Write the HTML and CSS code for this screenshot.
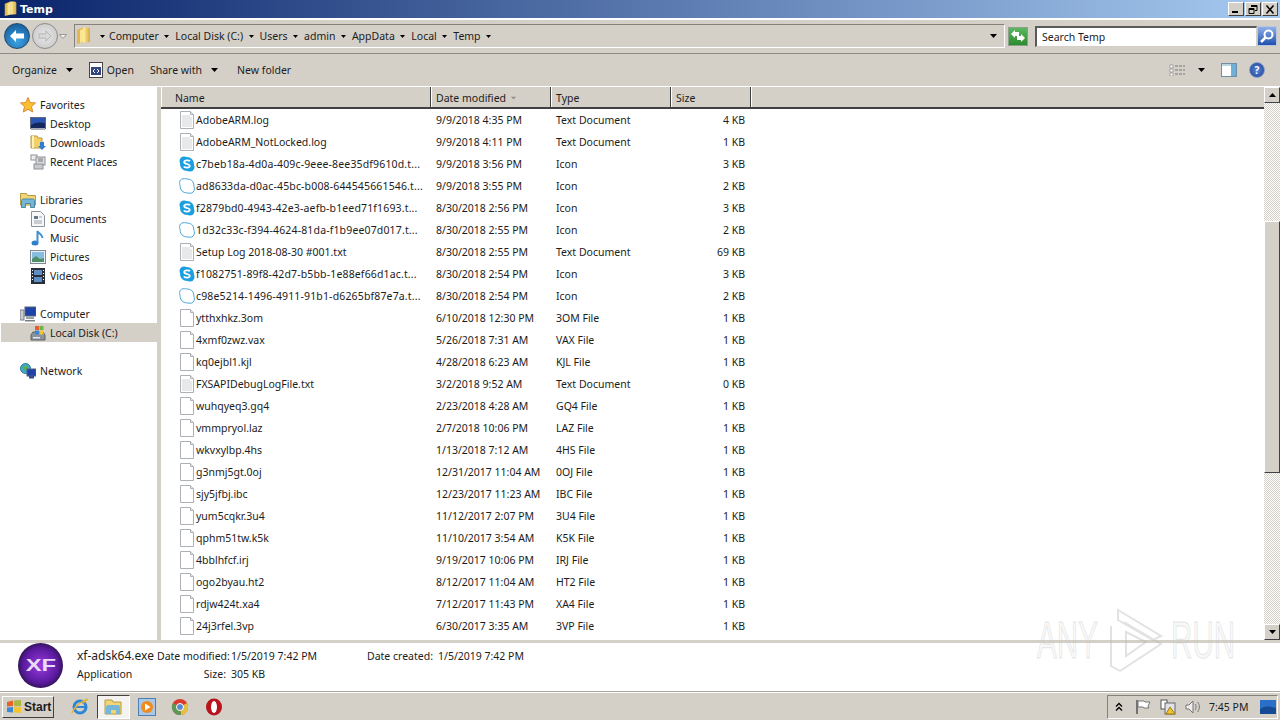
FILE: index.html
```html
<!DOCTYPE html>
<html lang="en">
<head>
    <meta charset="UTF-8">
    <title>Temp</title>
    <link rel="stylesheet" href="styles.css">
</head>
<body>
    <svg class="defs" width="0" height="0">
        <defs>
            <linearGradient id="folderFill" x1="0" y1="0" x2="1" y2="0">
                <stop offset="0" stop-color="#fff2a8"/>
                <stop offset="1" stop-color="#d9a93c"/>
            </linearGradient>
            <symbol id="doc" viewBox="0 0 16 18">
                <path d="M1.5.5h10l3 3v14h-13z" fill="#fff" stroke="#adb1b7"/>
                <path d="M11.5.5v3h3" fill="#e8e8e8" stroke="#adb1b7"/>
                <path d="M3 5h8M3 7h10M3 9h10M3 11h10M3 13h10M3 15h10" stroke="#cfd2d6"/>
            </symbol>
            <symbol id="blank" viewBox="0 0 16 18">
                <path d="M1.5.5h10l3 3v14h-13z" fill="#fff" stroke="#adb1b7"/>
                <path d="M11.5.5v3h3" fill="#e8e8e8" stroke="#adb1b7"/>
            </symbol>
            <symbol id="skype" viewBox="0 0 16 16">
                <circle cx="5" cy="5" r="4.5" fill="#1b9fe0"/>
                <circle cx="11" cy="11" r="4.5" fill="#1b9fe0"/>
                <circle cx="8" cy="8" r="7" fill="#1b9fe0"/>
                <path d="M11 5.2C10 4 5.4 3.8 5.2 6c-.2 2.400 5.800 1.600 5.600 4-.2 2.200-5 2-6 .6" fill="none" stroke="#fff" stroke-width="1.800"/>
            </symbol>
            <symbol id="skypeline" viewBox="0 0 16 16">
                <path d="M4 .8C6 .4 8 1 9 1.200c3.500 0 5.800 2.800 5.800 6 0 1.200.6 2 .6 3.800 0 2.500-2 4.300-4.400 4.300-1.500 0-2.200-.5-3.400-.5C4 14.800 1.200 12 1.200 8.500 1.200 7.500.6 6.500.6 4.500.6 2.500 2 1 4 .8z" fill="#fff" stroke="#4aa6d8"/>
            </symbol>
            <symbol id="folder" viewBox="0 0 16 18">
                <path d="M1 3l6-2.500v15L1 17z" fill="#e3b84d"/>
                <path d="M7 .5h5c1 0 2 1 2 2V15l-7 .5z" fill="url(#folderFill)"/>
                <path d="M4 3l3-1v13l-3 1z" fill="#fbe58f"/>
            </symbol>
            <symbol id="star" viewBox="0 0 16 16">
                <path d="M8 .5l2.200 5 5.300.5-4 3.500 1.200 5.500L8 12.300 3.300 15l1.200-5.500-4-3.500 5.300-.5z" fill="#fbc02d" stroke="#d98a3a"/>
            </symbol>
            <symbol id="desktop" viewBox="0 0 16 14">
                <rect x=".5" y=".5" width="15" height="11" fill="#2a55b0" stroke="#5d6a80"/>
                <path d="M1 8c4-3 9-3 14-2v5H1z" fill="#12285f"/>
                <rect x="1" y="11" width="14" height="2" fill="#a8adb5"/>
            </symbol>
            <symbol id="download" viewBox="0 0 16 16">
                <path d="M1 1h6l1 2h4v10H1z" fill="#f2cf69" stroke="#b8973d"/>
                <path d="M3 1v12" stroke="#fff2b5" stroke-width="2"/>
                <path d="M10 7h4v4h2l-4 4-4-4h2z" fill="#2f7fd0"/>
            </symbol>
            <symbol id="recent" viewBox="0 0 16 16">
                <rect x="1" y="1" width="6" height="5" fill="#eee" stroke="#8c9097"/>
                <rect x="6" y="3" width="9" height="8" fill="#ddd" stroke="#8c9097"/>
                <rect x="4" y="10" width="9" height="5" fill="#c7cacd" stroke="#8c9097"/>
                <path d="M8 5h5M8 7h5" stroke="#777"/>
            </symbol>
            <symbol id="libraries" viewBox="0 0 16 16">
                <path d="M.5 4V1.500h6l1 2h8V13H.5z" fill="#f2d675" stroke="#b69a45"/>
                <path d="M1.500 15.500v-7c0-1 1-1.500 2-1.500h9c1 0 2 .5 2 1.500v7h-4v-4h-5v4z" fill="#74b7d8" stroke="#4d87a5"/>
            </symbol>
            <symbol id="documents" viewBox="0 0 14 16">
                <path d="M.5.500h9l4 4v11H.5z" fill="#f6f7f9" stroke="#8b929c"/>
                <path d="M3 5h4v3H3z" fill="#63788f"/>
                <path d="M3 10h8M3 12h8M8 6h3" stroke="#9aa2ac"/>
            </symbol>
            <symbol id="music" viewBox="0 0 14 16">
                <ellipse cx="4" cy="13" rx="3.500" ry="2.500" fill="#2f7dc4"/>
                <path d="M6.500 13V1c1 3 5 3 5 7" fill="none" stroke="#3f8fd4" stroke-width="2"/>
            </symbol>
            <symbol id="pictures" viewBox="0 0 16 14">
                <rect x=".5" y=".5" width="15" height="13" fill="#eef1f4" stroke="#7f8a96"/>
                <rect x="2" y="2" width="12" height="10" fill="#86bde0"/>
                <path d="M2 9l4-3 4 3 4-1v4H2z" fill="#4f8f68"/>
            </symbol>
            <symbol id="videos" viewBox="0 0 14 16">
                <rect width="14" height="16" fill="#2a2f38"/>
                <path d="M3 2h8v5H3zM3 9h8v5H3z" fill="#5c8fc4"/>
                <path d="M1 2h1v1H1zM1 5h1v1H1zM1 8h1v1H1zM1 11h1v1H1zM12 2h1v1h-1zM12 5h1v1h-1zM12 8h1v1h-1zM12 11h1v1h-1z" fill="#fff"/>
            </symbol>
            <symbol id="computer" viewBox="0 0 16 16">
                <rect x="5" y="1" width="11" height="9" fill="#1d43a8" stroke="#55607a"/>
                <rect x="0" y="4" width="4" height="10" fill="#c8cace" stroke="#7a7e85"/>
                <rect x="6" y="11" width="8" height="2" fill="#9da1a8"/>
                <path d="M5 14h10v1.500H5z" fill="#7a7e85"/>
            </symbol>
            <symbol id="disk" viewBox="0 0 16 16">
                <path d="M1 10l2-3h10l2 3v5H1z" fill="#8b949c" stroke="#5b6168"/>
                <rect x="3" y="12" width="7" height="1.500" fill="#e5e7ea"/>
                <rect x="5" y="1" width="4" height="4" fill="#e85a30"/>
                <rect x="9.500" y="1" width="4" height="4" fill="#6ab544"/>
                <rect x="5" y="5.500" width="4" height="4" fill="#3a86d8"/>
                <rect x="9.500" y="5.500" width="4" height="4" fill="#f4c430"/>
            </symbol>
            <symbol id="network" viewBox="0 0 16 16">
                <circle cx="5.500" cy="5.500" r="5" fill="#41a9c9" stroke="#2d7a96"/>
                <path d="M2 3l3 1 2-2 1 3-3 3z" fill="#57b04a"/>
                <rect x="7" y="6" width="9" height="7" fill="#1d43a8" stroke="#55607a"/>
                <rect x="9" y="13" width="5" height="2.500" fill="#3a4a8a"/>
            </symbol>
            <symbol id="arrow" viewBox="0 0 7 4">
                <path d="M0 0h7L3.500 4z" fill="#000"/>
            </symbol>
        </defs>
    </svg>

    <div class="titlebar">
        <svg class="ico16"><use href="#folder"/></svg>
        <span class="title-text">Temp</span>
        <div class="winbtns">
            <span class="winbtn"><svg viewBox="0 0 10 9" width="10" height="9"><path d="M1 6h6v2H1z" fill="#000"/></svg></span>
            <span class="winbtn"><svg viewBox="0 0 10 9" width="10" height="9"><path d="M3 .5h6v5H7M3 1.500h6M1 3.500h5v5H1zM1 4.500h5" fill="none" stroke="#000"/></svg></span>
            <span class="winbtn winbtn-close"><svg viewBox="0 0 10 9" width="10" height="9"><path d="M1.500.5l7 8M8.500.5l-7 8" stroke="#000" stroke-width="1.500"/></svg></span>
        </div>
    </div>

    <div class="addressbar">
        <div class="navbtns">
            <span class="round back">
                <svg viewBox="0 0 16 14" width="16" height="14"><path d="M1 7l6-6v3.500h8v5H7V13z" fill="#fff"/></svg>
            </span>
            <span class="round forward">
                <svg viewBox="0 0 16 14" width="14" height="12"><path d="M15 7L9 1v3.500H1v5h8V13z" fill="#d8d8d8" stroke="#b0b0b0"/></svg>
            </span>
            <svg class="hist" viewBox="0 0 8 5"><path d="M.5.500h7L4 4.500z" fill="#eee" stroke="#999"/></svg>
        </div>
        <div class="pathbox">
            <svg class="path-folder"><use href="#folder"/></svg>
            <svg class="crumb-arrow first"><use href="#arrow"/></svg>
            <span>Computer</span><svg class="crumb-arrow"><use href="#arrow"/></svg>
            <span>Local Disk (C:)</span><svg class="crumb-arrow"><use href="#arrow"/></svg>
            <span>Users</span><svg class="crumb-arrow"><use href="#arrow"/></svg>
            <span>admin</span><svg class="crumb-arrow"><use href="#arrow"/></svg>
            <span>AppData</span><svg class="crumb-arrow"><use href="#arrow"/></svg>
            <span>Local</span><svg class="crumb-arrow"><use href="#arrow"/></svg>
            <span>Temp</span><svg class="crumb-arrow"><use href="#arrow"/></svg>
            <svg class="path-drop"><use href="#arrow"/></svg>
        </div>
        <span class="refresh">
            <svg viewBox="0 0 14 12" width="14" height="12"><path d="M0 4l4-4v2h4v4H4v2zM14 8l-4 4v-2H6V6h4V4z" fill="#fff"/></svg>
        </span>
        <div class="searchbox">Search Temp</div>
        <span class="searchbtn">
            <svg viewBox="0 0 16 16" width="16" height="16"><circle cx="9.500" cy="6.500" r="4" fill="none" stroke="#fff" stroke-width="2"/><path d="M6.500 9.500L2 14" stroke="#fff" stroke-width="2.500"/></svg>
        </span>
    </div>

    <div class="toolbar">
        <span class="tool tool-org">Organize<svg class="tool-arrow"><use href="#arrow"/></svg></span>
        <span class="tool tool-open">
            <svg class="open-ico" viewBox="0 0 14 16"><rect x=".5" y=".5" width="13" height="15" fill="#fff" stroke="#444"/><rect x="2" y="5" width="10" height="8" fill="#33457e"/><path d="M4 9l2-2M4 9l2 2M10 9L8 7M10 9l-2 2" stroke="#fff"/></svg>
            Open
        </span>
        <span class="tool tool-share">Share with<svg class="tool-arrow"><use href="#arrow"/></svg></span>
        <span class="tool">New folder</span>
        <div class="tool-right">
            <svg class="views" viewBox="0 0 16 12"><path d="M1 1h3v3H1zM1 5h3v3H1zM1 9h3v3H1z" fill="#fff" stroke="#8a8a8a" stroke-width=".7"/><path d="M6 2h10M6 6h10M6 10h10" stroke="#77797d" stroke-dasharray="3 1"/></svg>
            <svg class="views-arrow"><use href="#arrow"/></svg>
            <svg class="pane" viewBox="0 0 16 14"><rect x=".5" y=".5" width="15" height="13" fill="#fff" stroke="#6f8ea8"/><rect x="10" y="1" width="5" height="12" fill="#6fb0d8"/><rect x="1" y="1" width="9" height="2" fill="#bcd3e4"/></svg>
            <span class="help">?</span>
        </div>
    </div>

    <div class="main">
        <nav class="sidebar">
            <div class="nav-group">
                <div class="nav-head"><svg class="ico16"><use href="#star"/></svg>Favorites</div>
                <div class="nav-item"><svg class="ico16"><use href="#desktop"/></svg>Desktop</div>
                <div class="nav-item"><svg class="ico16"><use href="#download"/></svg>Downloads</div>
                <div class="nav-item"><svg class="ico16"><use href="#recent"/></svg>Recent Places</div>
            </div>
            <div class="nav-group">
                <div class="nav-head"><svg class="ico16"><use href="#libraries"/></svg>Libraries</div>
                <div class="nav-item"><svg class="ico16"><use href="#documents"/></svg>Documents</div>
                <div class="nav-item"><svg class="ico16"><use href="#music"/></svg>Music</div>
                <div class="nav-item"><svg class="ico16"><use href="#pictures"/></svg>Pictures</div>
                <div class="nav-item"><svg class="ico16"><use href="#videos"/></svg>Videos</div>
            </div>
            <div class="nav-group">
                <div class="nav-head"><svg class="ico16"><use href="#computer"/></svg>Computer</div>
                <div class="nav-item selected"><svg class="ico16"><use href="#disk"/></svg>Local Disk (C:)</div>
            </div>
            <div class="nav-group">
                <div class="nav-head"><svg class="ico16"><use href="#network"/></svg>Network</div>
            </div>
        </nav>

        <section class="files">
            <div class="list-head">
                <span class="col-head name-head">Name</span>
                <span class="col-head">Date modified<svg class="sort" viewBox="0 0 7 4"><path d="M0 0h7L3.500 4z" fill="#8f8f8f"/></svg></span>
                <span class="col-head">Type</span>
                <span class="col-head">Size</span>
                <span class="col-fill"></span>
            </div>
            <div class="rows">
                <div class="row"><span class="c-name"><svg class="file-ico"><use href="#doc"/></svg>AdobeARM.log</span><span>9/9/2018 4:35 PM</span><span>Text Document</span><span class="c-size">4 KB</span></div>
                <div class="row"><span class="c-name"><svg class="file-ico"><use href="#doc"/></svg>AdobeARM_NotLocked.log</span><span>9/9/2018 4:11 PM</span><span>Text Document</span><span class="c-size">1 KB</span></div>
                <div class="row"><span class="c-name c-hash"><svg class="file-ico"><use href="#skype"/></svg>c7beb18a-4d0a-409c-9eee-8ee35df9610d.t...</span><span>9/9/2018 3:56 PM</span><span>Icon</span><span class="c-size">3 KB</span></div>
                <div class="row"><span class="c-name c-hash"><svg class="file-ico"><use href="#skypeline"/></svg>ad8633da-d0ac-45bc-b008-644545661546.t...</span><span>9/9/2018 3:55 PM</span><span>Icon</span><span class="c-size">2 KB</span></div>
                <div class="row"><span class="c-name c-hash"><svg class="file-ico"><use href="#skype"/></svg>f2879bd0-4943-42e3-aefb-b1eed71f1693.t...</span><span>8/30/2018 2:56 PM</span><span>Icon</span><span class="c-size">3 KB</span></div>
                <div class="row"><span class="c-name c-hash"><svg class="file-ico"><use href="#skypeline"/></svg>1d32c33c-f394-4624-81da-f1b9ee07d017.t...</span><span>8/30/2018 2:55 PM</span><span>Icon</span><span class="c-size">2 KB</span></div>
                <div class="row"><span class="c-name"><svg class="file-ico"><use href="#doc"/></svg>Setup Log 2018-08-30 #001.txt</span><span>8/30/2018 2:55 PM</span><span>Text Document</span><span class="c-size">69 KB</span></div>
                <div class="row"><span class="c-name c-hash"><svg class="file-ico"><use href="#skype"/></svg>f1082751-89f8-42d7-b5bb-1e88ef66d1ac.t...</span><span>8/30/2018 2:54 PM</span><span>Icon</span><span class="c-size">3 KB</span></div>
                <div class="row"><span class="c-name c-hash"><svg class="file-ico"><use href="#skypeline"/></svg>c98e5214-1496-4911-91b1-d6265bf87e7a.t...</span><span>8/30/2018 2:54 PM</span><span>Icon</span><span class="c-size">2 KB</span></div>
                <div class="row"><span class="c-name"><svg class="file-ico"><use href="#blank"/></svg>ytthxhkz.3om</span><span>6/10/2018 12:30 PM</span><span>3OM File</span><span class="c-size">1 KB</span></div>
                <div class="row"><span class="c-name"><svg class="file-ico"><use href="#blank"/></svg>4xmf0zwz.vax</span><span>5/26/2018 7:31 AM</span><span>VAX File</span><span class="c-size">1 KB</span></div>
                <div class="row"><span class="c-name"><svg class="file-ico"><use href="#blank"/></svg>kq0ejbl1.kjl</span><span>4/28/2018 6:23 AM</span><span>KJL File</span><span class="c-size">1 KB</span></div>
                <div class="row"><span class="c-name"><svg class="file-ico"><use href="#doc"/></svg>FXSAPIDebugLogFile.txt</span><span>3/2/2018 9:52 AM</span><span>Text Document</span><span class="c-size">0 KB</span></div>
                <div class="row"><span class="c-name"><svg class="file-ico"><use href="#blank"/></svg>wuhqyeq3.gq4</span><span>2/23/2018 4:28 AM</span><span>GQ4 File</span><span class="c-size">1 KB</span></div>
                <div class="row"><span class="c-name"><svg class="file-ico"><use href="#blank"/></svg>vmmpryol.laz</span><span>2/7/2018 10:06 PM</span><span>LAZ File</span><span class="c-size">1 KB</span></div>
                <div class="row"><span class="c-name"><svg class="file-ico"><use href="#blank"/></svg>wkvxylbp.4hs</span><span>1/13/2018 7:12 AM</span><span>4HS File</span><span class="c-size">1 KB</span></div>
                <div class="row"><span class="c-name"><svg class="file-ico"><use href="#blank"/></svg>g3nmj5gt.0oj</span><span>12/31/2017 11:04 AM</span><span>0OJ File</span><span class="c-size">1 KB</span></div>
                <div class="row"><span class="c-name"><svg class="file-ico"><use href="#blank"/></svg>sjy5jfbj.ibc</span><span>12/23/2017 11:23 AM</span><span>IBC File</span><span class="c-size">1 KB</span></div>
                <div class="row"><span class="c-name"><svg class="file-ico"><use href="#blank"/></svg>yum5cqkr.3u4</span><span>11/12/2017 2:07 PM</span><span>3U4 File</span><span class="c-size">1 KB</span></div>
                <div class="row"><span class="c-name"><svg class="file-ico"><use href="#blank"/></svg>qphm51tw.k5k</span><span>11/10/2017 3:54 AM</span><span>K5K File</span><span class="c-size">1 KB</span></div>
                <div class="row"><span class="c-name"><svg class="file-ico"><use href="#blank"/></svg>4bblhfcf.irj</span><span>9/19/2017 10:06 PM</span><span>IRJ File</span><span class="c-size">1 KB</span></div>
                <div class="row"><span class="c-name"><svg class="file-ico"><use href="#blank"/></svg>ogo2byau.ht2</span><span>8/12/2017 11:04 AM</span><span>HT2 File</span><span class="c-size">1 KB</span></div>
                <div class="row"><span class="c-name"><svg class="file-ico"><use href="#blank"/></svg>rdjw424t.xa4</span><span>7/12/2017 11:43 PM</span><span>XA4 File</span><span class="c-size">1 KB</span></div>
                <div class="row"><span class="c-name"><svg class="file-ico"><use href="#blank"/></svg>24j3rfel.3vp</span><span>6/30/2017 3:35 AM</span><span>3VP File</span><span class="c-size">1 KB</span></div>
            </div>
        </section>

        <div class="scrollbar">
            <span class="sb-btn"><svg class="sb-up"><use href="#arrow"/></svg></span>
            <div class="sb-track">
                <div class="sb-thumb"></div>
            </div>
            <span class="sb-btn"><svg class="sb-down"><use href="#arrow"/></svg></span>
        </div>
    </div>

    <div class="details">
        <div class="app-logo"><span class="app-logo-text">XF</span></div>
        <div class="det-col det-name">
            <div class="det-filename">xf-adsk64.exe</div>
            <div>Application</div>
        </div>
        <div class="det-col det-mod">
            <div class="det-pair"><span class="det-key">Date modified:</span><span>1/5/2019 7:42 PM</span></div>
            <div class="det-pair"><span class="det-key">Size:</span><span>305 KB</span></div>
        </div>
        <div class="det-col det-created">
            <div class="det-pair"><span>Date created:</span><span>1/5/2019 7:42 PM</span></div>
        </div>
    </div>

    <div class="taskbar">
        <span class="start">
            <svg viewBox="0 0 16 14" width="16" height="14"><path d="M1 2l6-1.500V6L1 6.500z" fill="#e8602c"/><path d="M8 .5l7-.5v6l-7 .3z" fill="#a8b840"/><path d="M1 7.500L7 7v5.500L1 12z" fill="#3a8ad8"/><path d="M8 7.300l7-.3v6l-7-.5z" fill="#f4c430"/></svg>
            Start
        </span>
        <div class="quick">
            <span class="qbtn">
                <svg viewBox="0 0 18 18" width="18" height="18"><circle cx="9" cy="9" r="6" fill="none" stroke="#2f86d4" stroke-width="3"/><path d="M5 9h9" stroke="#2f86d4" stroke-width="2"/><path d="M1 15C3 9 10 3 17 1c-2 1-4 3-5 4" fill="none" stroke="#e8b22c" stroke-width="1.500"/></svg>
            </span>
            <span class="qbtn qbtn-active">
                <svg viewBox="0 0 18 16" width="18" height="16"><path d="M1 3V1h7l1 2h8v12H1z" fill="#f2d675" stroke="#b69a45"/><path d="M2 15V8c0-1 1-2 2-2h10c1 0 2 1 2 2v7h-4v-4H7v4z" fill="#74b7d8"/></svg>
            </span>
            <span class="qbtn">
                <svg viewBox="0 0 18 18" width="18" height="18"><rect x=".5" y=".5" width="17" height="17" fill="#a9c8e8" stroke="#4d7fb5"/><circle cx="9" cy="9" r="6" fill="#f08a1c"/><path d="M7 5.500L12.500 9 7 12.500z" fill="#fff"/></svg>
            </span>
            <span class="qbtn">
                <svg viewBox="0 0 18 18" width="18" height="18"><circle cx="9" cy="9" r="8" fill="#d93a2e"/><path d="M9 9l7-4a8 8 0 0 1-6 12z" fill="#e8c040"/><path d="M9 9l1 8A8 8 0 0 1 2 5z" fill="#5a9a55"/><circle cx="9" cy="9" r="3.500" fill="#5a88cc" stroke="#fff"/></svg>
            </span>
            <span class="qbtn">
                <svg viewBox="0 0 18 18" width="18" height="18"><ellipse cx="9" cy="9" rx="8" ry="8.500" fill="#b8141c"/><ellipse cx="9" cy="9" rx="3" ry="6" fill="#fff"/></svg>
            </span>
        </div>
        <div class="tray">
            <svg class="tray-chev" viewBox="0 0 8 10"><path d="M1 4.500l3-3 3 3M1 8.500l3-3 3 3" fill="none" stroke="#000" stroke-width="1.300"/></svg>
            <svg class="tray-ico tray-flag" viewBox="0 0 16 16"><path d="M2 1v14" stroke="#555" stroke-width="1.500"/><path d="M3 2h6l1 1h5l-2 4 1 2H9L8 8H3z" fill="#fff" stroke="#777"/></svg>
            <svg class="tray-ico" viewBox="0 0 16 16"><rect x="1" y="1" width="6" height="9" fill="#fff" stroke="#555"/><rect x="5" y="4" width="10" height="11" fill="#dfe3e8" stroke="#666"/><path d="M10 8l5 7H6z" fill="#f4c430" stroke="#a07a10"/></svg>
            <svg class="tray-ico" viewBox="0 0 16 16"><path d="M1 6h3l4-4v12l-4-4H1z" fill="#eee" stroke="#777"/><path d="M10 5c1.500 1.500 1.500 4.500 0 6M12.500 3c2.500 3 2.500 7 0 10" fill="none" stroke="#777"/></svg>
            <span class="clock">7:45 PM</span>
            <svg class="tray-desk" viewBox="0 0 16 14"><rect width="16" height="14" fill="#2a70c8"/><path d="M0 9c5-3 10-3 16-1v6H0z" fill="#154a94"/></svg>
        </div>
    </div>

    <div class="watermark">
        <span class="wm-word">ANY</span>
        <svg class="wm-logo" viewBox="0 0 60 64"><path d="M5 18V58L14 63M14 63L55 36 18 14M12 2L55 28 47 32 12 12zM20 24L40 34 20 48z" fill="none" stroke="rgba(180,180,180,.38)" stroke-width="2"/></svg>
        <span class="wm-word">RUN</span>
    </div>
</body>
</html>
```

FILE: styles.css
```css
* {
    box-sizing: border-box;
}

html, body {
    margin: 0;
    padding: 0;
}

body {
    width: 1280px;
    height: 720px;
    overflow: hidden;
    display: flex;
    flex-direction: column;
    background-color: #d4d0c8;
    color: #1c1c1c;
    font-family: "Noto Sans", sans-serif;
    font-size: 10.500px;
    position: relative;
}

svg {
    display: block;
    flex: none;
}

.defs {
    position: absolute;
}

.ico16 {
    width: 16px;
    height: 16px;
}

/* title bar */
.titlebar {
    height: 18px;
    display: flex;
    align-items: center;
    padding-left: 3px;
    background: linear-gradient(to right, #0a246a, #a6caf0);
}

.title-text {
    margin-left: 1px;
    color: #fff;
    font-family: "DejaVu Sans", sans-serif;
    font-weight: bold;
    font-size: 11px;
}

.winbtns {
    margin-left: auto;
    margin-right: 2px;
    display: flex;
    gap: 1px;
}

.winbtn {
    width: 16px;
    height: 14px;
    background-color: #d4d0c8;
    border: 1px solid;
    border-color: #fff #404040 #404040 #fff;
    display: flex;
    align-items: center;
    justify-content: center;
}

/* address row */
.addressbar {
    height: 36px;
    display: flex;
    align-items: center;
    border-top: 2px solid #fff;
    border-bottom: 1px solid #8f8c85;
    padding-left: 4px;
    padding-bottom: 1px;
}

.navbtns {
    display: flex;
    align-items: center;
    width: 70px;
}

.round {
    border-radius: 50%;
    display: flex;
    align-items: center;
    justify-content: center;
}

.back {
    width: 26px;
    height: 26px;
    background: radial-gradient(circle at 50% 70%, #3fa5e6, #0f4f8e);
    border: 1px solid #234a6c;
}

.forward {
    width: 26px;
    height: 26px;
    margin-left: 2px;
    background: radial-gradient(circle, #e8e8e8, #c4c4c4);
    border: 1px solid #8c8c8c;
}

.hist {
    width: 8px;
    height: 5px;
    margin-left: 1px;
}

.pathbox {
    width: 931px;
    height: 24px;
    display: flex;
    align-items: center;
    border: 1px solid;
    border-color: #85827b #fff #fff #85827b;
}

.path-folder {
    width: 16px;
    height: 18px;
    margin-left: 1px;
}

.crumb-arrow {
    width: 5px;
    height: 3px;
    margin: 0 6px 0 5.500px;
}

.crumb-arrow.first {
    margin-left: 8px;
    margin-right: 4px;
}

.path-drop {
    width: 7px;
    height: 4px;
    margin-left: auto;
    margin-right: 7px;
}

.refresh {
    width: 20px;
    height: 19px;
    margin-left: 3px;
    display: flex;
    align-items: center;
    justify-content: center;
    background: linear-gradient(#5cb860, #2c8a2e);
    border: 1px solid #8aa08a;
}

.searchbox {
    width: 222px;
    height: 21px;
    margin-left: 7px;
    padding-left: 5px;
    display: flex;
    align-items: center;
    background-color: #fff;
    border: 1px solid;
    border-width: 2px 1px 1px 2px;
    border-color: #5a5a5a #d4d0c8 #d4d0c8 #5a5a5a;
}

.searchbtn {
    width: 20px;
    height: 20px;
    display: flex;
    align-items: center;
    justify-content: center;
    background: linear-gradient(#8fb0e8, #1f4fb0);
    border: 1px solid #b9c7dd;
}

/* command bar */
.toolbar {
    height: 32px;
    display: flex;
    align-items: center;
    padding-left: 12px;
    padding-right: 15px;
}

.tool {
    display: flex;
    align-items: center;
}

.tool-org {
    margin-right: 16px;
}

.tool-open {
    margin-right: 16px;
}

.tool-share {
    margin-right: 19px;
}

.tool-arrow {
    width: 7px;
    height: 4px;
    margin-left: 9px;
}

.open-ico {
    width: 14px;
    height: 16px;
    margin-right: 4px;
}

.tool-right {
    margin-left: auto;
    display: flex;
    align-items: center;
}

.views {
    width: 16px;
    height: 12px;
}

.views-arrow {
    width: 7px;
    height: 4px;
    margin-left: 13px;
}

.pane {
    width: 16px;
    height: 14px;
    margin-left: 16px;
}

.help {
    width: 16px;
    height: 16px;
    margin-left: 12px;
    border-radius: 50%;
    background: radial-gradient(circle, #5a86d8, #1d3f94);
    border: 1px solid #8a9cc4;
    color: #fff;
    font-weight: bold;
    font-size: 10px;
    display: flex;
    align-items: center;
    justify-content: center;
}

/* main area */
.main {
    height: 554px;
    display: flex;
    border-top: 1px solid #fff;
}

.sidebar {
    width: 157px;
    background-color: #fff;
    padding-top: 8px;
}

.nav-group {
    margin-bottom: 19px;
}

.nav-head,
.nav-item {
    height: 19px;
    display: flex;
    align-items: center;
    gap: 4px;
}

.nav-head {
    padding-left: 20px;
}

.nav-item {
    padding-left: 30px;
}

.nav-item.selected {
    background-color: #d4d0c8;
    margin-left: 1px;
    padding-left: 29px;
}

.files {
    width: 1103px;
    margin-left: 4px;
    background-color: #fff;
    display: flex;
    flex-direction: column;
}

.list-head {
    height: 22px;
    display: grid;
    grid-template-columns: 270px 120px 120px 80px 1fr;
    background-color: #d4d0c8;
    border-bottom: 2px solid #404040;
}

.col-head {
    display: flex;
    align-items: center;
    padding: 2px 0 0 5px;
    border-right: 1px solid #404040;
    box-shadow: inset 1px 0 0 #fff;
}

.name-head {
    padding-left: 14px;
}

.col-fill {
    box-shadow: inset 1px 0 0 #fff;
}

.sort {
    width: 7px;
    height: 4px;
    margin-left: 4px;
    transform: scale(.8);
}

.row {
    height: 22px;
    display: grid;
    grid-template-columns: 270px 120px 120px 74px;
    align-items: center;
}

.row > span {
    padding-left: 5px;
    white-space: nowrap;
}

.row > .c-name {
    display: flex;
    align-items: center;
    gap: 1px;
    padding-left: 18px;
}

.row > .c-hash {
    letter-spacing: .15px;
}

.row > .c-size {
    text-align: right;
    padding-left: 0;
}

.file-ico {
    width: 16px;
    height: 18px;
}

/* scrollbar */
.scrollbar {
    width: 16px;
    display: flex;
    flex-direction: column;
}

.sb-btn {
    height: 16px;
    background-color: #d4d0c8;
    border: 1px solid;
    border-color: #fff #404040 #404040 #fff;
    display: flex;
    align-items: center;
    justify-content: center;
}

.sb-up,
.sb-down {
    width: 7px;
    height: 4px;
}

.sb-up {
    transform: rotate(180deg);
}

.sb-track {
    flex: 1;
    background-image: repeating-conic-gradient(#d4d0c8 0 25%, #fff 0 50%);
    background-size: 2px 2px;
    padding-top: 118px;
}

.sb-thumb {
    height: 252px;
    background-color: #d4d0c8;
    border: 1px solid;
    border-color: #fff #404040 #404040 #fff;
}

/* details pane */
.details {
    height: 52px;
    display: flex;
    background-color: #fff;
    border-top: 3px solid #d4d0c8;
    border-bottom: 1px solid #a8a59e;
    padding-left: 18px;
}

.app-logo {
    width: 45px;
    height: 45px;
    border-radius: 50%;
    background: radial-gradient(circle, #9a3ae0 0, #5a1a9e 55%, #101020 85%);
    display: flex;
    align-items: center;
    justify-content: center;
}

.app-logo-text {
    color: #e8dcf8;
    font-family: "Liberation Sans", sans-serif;
    font-weight: bold;
    font-size: 17px;
    transform: scaleX(1.4);
}

.det-col {
    padding-top: 4px;
    line-height: 18px;
}

.det-name {
    margin-left: 14px;
    width: 80px;
}

.det-filename {
    font-size: 12px;
}

.det-mod {
    width: 210px;
}

.det-pair {
    display: flex;
    gap: 5px;
}

.det-key {
    width: 69px;
    flex: none;
    text-align: right;
    white-space: nowrap;
}

/* taskbar */
.taskbar {
    height: 28px;
    display: flex;
    align-items: center;
    border-top: 1px solid #fff;
    padding-left: 2px;
}

.start {
    width: 52px;
    height: 22px;
    display: flex;
    align-items: center;
    gap: 2px;
    padding-left: 3px;
    border: 1px solid;
    border-color: #fff #404040 #404040 #fff;
    font-family: "Liberation Sans", sans-serif;
    font-weight: bold;
    font-size: 12px;
}

.quick {
    display: flex;
    align-items: center;
    margin-left: 9px;
}

.qbtn {
    width: 33.500px;
    height: 24px;
    display: flex;
    align-items: center;
    justify-content: center;
}

.qbtn-active {
    background-color: #f4f3f0;
    border: 1px solid;
    border-color: #404040 #fff #fff #404040;
}

.tray {
    margin-left: auto;
    margin-right: 2px;
    width: 171px;
    height: 24px;
    display: flex;
    align-items: center;
    border: 1px solid;
    border-color: #85827b #fff #fff #85827b;
    padding-left: 7px;
}

.tray-chev {
    width: 8px;
    height: 10px;
    margin-right: 6px;
}

.tray-ico {
    width: 16px;
    height: 16px;
    margin-left: 9px;
}

.tray-flag {
    margin-left: 6px;
}

.clock {
    margin-left: 8px;
    width: 40px;
    white-space: nowrap;
}

.tray-desk {
    width: 16px;
    height: 14px;
    margin-left: 11px;
}

/* watermark */
.watermark {
    position: absolute;
    left: 1037px;
    top: 608px;
    width: 198px;
    height: 64px;
    display: flex;
    align-items: center;
    justify-content: space-between;
}

.wm-word {
    width: 64px;
    color: rgba(200, 200, 200, .12);
    -webkit-text-stroke: 1px rgba(180, 180, 180, .35);
    font-family: "Liberation Sans", sans-serif;
    font-size: 52px;
    line-height: 1;
    white-space: nowrap;
    transform: scaleX(.57);
    transform-origin: left center;
}

.wm-logo {
    width: 60px;
    height: 64px;
}
```
